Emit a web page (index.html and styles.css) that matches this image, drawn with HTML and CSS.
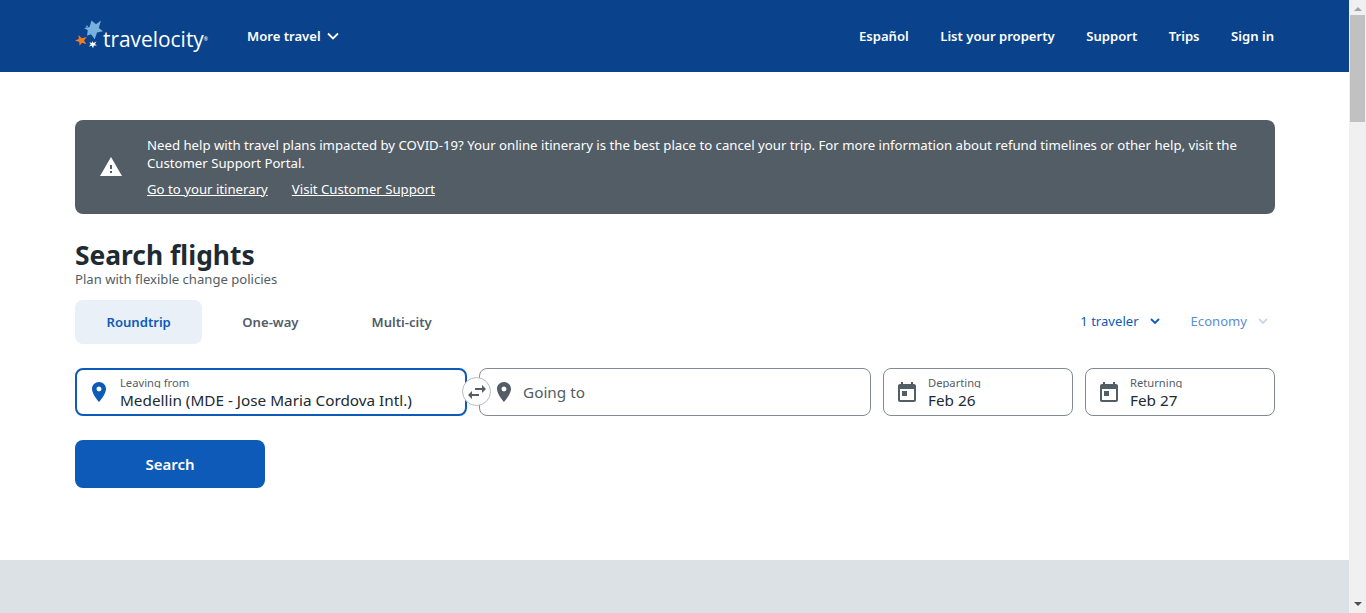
FILE: index.html
```html
<!DOCTYPE html>
<html lang="en">
<head>
<meta charset="UTF-8" />
<meta name="viewport" content="width=device-width, initial-scale=1" />
<title>Search flights</title>
<link rel="stylesheet" href="styles.css">
</head>
<body>

<div class="page">
  <header class="topbar">
    <a class="logo" href="#">
      <svg class="logo-stars" width="30" height="32" viewBox="0 0 30 32">
        <path fill="#78b0de" d="M16.500 2.500l4.500 3.800 5-3.800-2.200 7.500 4.200 3.200-6 1.300-2.300 6.800-3.700-5-4 1.500.8-5.500-3.800-2.300 5.500-1z"/>
        <circle fill="#78b0de" cx="12" cy="8.500" r=".9"/>
        <path fill="#f37b21" d="M3.500 17l3.300 3.200 5-1.200-2.800 3.400 2.500 3.800-4.400-1.400-2.600 3-.2-3.700L0 22.500l3.800-1.500z"/>
        <path fill="#fff" d="M17.500 23l1 2 3-1.500-1.600 2.600 2 1.500-3-.1-.9 2.700-1.200-2.400-3.200.8 2.200-2.100-1.500-2.200 2.700.8z"/>
      </svg>
      <span class="logo-text">travelocity</span><span class="logo-mark">®</span>
    </a>
    <a class="more-travel" href="#">More travel
      <svg width="12" height="8" viewBox="0 0 12 8"><path d="M1 1.500l5 5 5-5" fill="none" stroke="#fff" stroke-width="1.800"/></svg>
    </a>
    <nav class="topnav">
      <a href="#">Español</a>
      <a href="#">List your property</a>
      <a href="#">Support</a>
      <a href="#">Trips</a>
      <a href="#">Sign in</a>
    </nav>
  </header>

  <main class="content">
    <section class="notice">
      <svg class="notice-icon" width="24" height="24" viewBox="0 0 24 24">
        <path fill="#fff" d="M1 21h22L12 2 1 21zm12-3h-2v-2h2v2zm0-4h-2v-4h2v4z"/>
      </svg>
      <div class="notice-body">
        <p>Need help with travel plans impacted by COVID-19? Your online itinerary is the best place to cancel your trip. For more information about refund timelines or other help, visit the Customer Support Portal.</p>
        <div class="notice-links">
          <a href="#">Go to your itinerary</a>
          <a href="#">Visit Customer Support</a>
        </div>
      </div>
    </section>

    <h1>Search flights</h1>
    <p class="subtitle">Plan with flexible change policies</p>

    <div class="options">
      <div class="tabs">
        <a class="tab active" href="#">Roundtrip</a>
        <a class="tab" href="#">One-way</a>
        <a class="tab" href="#">Multi-city</a>
      </div>
      <div class="selects">
        <a class="select" href="#">1 traveler
          <svg width="10" height="7" viewBox="0 0 10 7"><path d="M1 1l4 4 4-4" fill="none" stroke="#0d5ab8" stroke-width="1.800"/></svg>
        </a>
        <a class="select faded" href="#">Economy
          <svg width="10" height="7" viewBox="0 0 10 7"><path d="M1 1l4 4 4-4" fill="none" stroke="#c6d8ee" stroke-width="1.800"/></svg>
        </a>
      </div>
    </div>

    <div class="fields">
      <div class="field place focus">
        <svg class="icon" width="14" height="20" viewBox="5 2 14 20"><path fill="#0d5ab8" d="M12 2C8.130 2 5 5.130 5 9c0 5.250 7 13 7 13s7-7.750 7-13c0-3.870-3.130-7-7-7zm0 9.500a2.500 2.500 0 0 1 0-5 2.500 2.500 0 0 1 0 5z"/></svg>
        <div class="field-text">
          <span class="field-label">Leaving from</span>
          <span class="field-value">Medellin (MDE - Jose Maria Cordova Intl.)</span>
        </div>
      </div>
      <div class="field place going">
        <svg class="icon" width="14" height="20" viewBox="5 2 14 20"><path fill="#535d66" d="M12 2C8.130 2 5 5.130 5 9c0 5.250 7 13 7 13s7-7.750 7-13c0-3.870-3.130-7-7-7zm0 9.500a2.500 2.500 0 0 1 0-5 2.500 2.500 0 0 1 0 5z"/></svg>
        <span class="placeholder">Going to</span>
        <span class="swap">
          <svg width="24" height="24" viewBox="0 0 24 24"><path fill="#535d66" d="M6.990 11L3 15l3.990 4v-3H14v-2H6.990v-3zM21 9l-3.990-4v3H10v2h7.010v3L21 9z"/></svg>
        </span>
      </div>
      <div class="field date">
        <svg class="icon" width="18" height="20" viewBox="3 2 18 20"><path fill="#535d66" d="M19 4h-1V2h-2v2H8V2H6v2H5c-1.110 0-1.990.9-1.990 2L3 20c0 1.100.89 2 2 2h14c1.100 0 2-.9 2-2V6c0-1.100-.9-2-2-2zm0 16H5V9h14v11zM7 11h5v5H7z"/></svg>
        <div class="field-text">
          <span class="field-label">Departing</span>
          <span class="field-value">Feb 26</span>
        </div>
      </div>
      <div class="field date">
        <svg class="icon" width="18" height="20" viewBox="3 2 18 20"><path fill="#535d66" d="M19 4h-1V2h-2v2H8V2H6v2H5c-1.110 0-1.990.9-1.990 2L3 20c0 1.100.89 2 2 2h14c1.100 0 2-.9 2-2V6c0-1.100-.9-2-2-2zm0 16H5V9h14v11zM7 11h5v5H7z"/></svg>
        <div class="field-text">
          <span class="field-label">Returning</span>
          <span class="field-value">Feb 27</span>
        </div>
      </div>
    </div>

    <button class="search-btn">Search</button>
  </main>

  <div class="footer-band"></div>
</div>

<div class="scrollbar">
  <span class="arrow up"></span>
  <span class="thumb"></span>
  <span class="arrow down"></span>
</div>

</body>
</html>
```

FILE: styles.css
```css
* {
  box-sizing: border-box;
}
html, body {
  height: 100%;
}
body {
  margin: 0;
  display: flex;
  overflow: hidden;
  font-family: "Noto Sans", Arial, sans-serif;
  font-size: 13.200px;
  color: #202a33;
  background: #fff;
}
a {
  color: inherit;
  text-decoration: none;
}
.page {
  flex: 1;
  min-width: 0;
  display: flex;
  flex-direction: column;
}

/* top bar */
.topbar {
  height: 72px;
  flex-shrink: 0;
  display: flex;
  align-items: center;
  padding: 0 75px;
  background: #0a438b;
  color: #fff;
  font-weight: 600;
  font-size: 13.100px;
}
.logo {
  display: flex;
  align-items: flex-start;
  width: 172px;
  height: 34px;
  margin-top: -2px;
}
.logo-stars {
  flex-shrink: 0;
  margin-right: -2px;
}
.logo-text {
  margin-top: 6px;
  font-family: "Open Sans", sans-serif;
  font-weight: 400;
  font-size: 20.900px;
  line-height: 30px;
}
.logo-mark {
  margin-top: 18px;
  font-size: 5px;
  line-height: 6px;
}
.more-travel {
  display: flex;
  align-items: center;
  gap: 6px;
}
.topnav {
  margin-left: auto;
  display: flex;
  gap: 31.500px;
}

.content {
  flex: 1;
  padding: 48px 74px 0 75px;
}

/* covid notice */
.notice {
  display: flex;
  align-items: center;
  height: 94px;
  padding: 0 24px;
  border-radius: 8px;
  background: #535d66;
  color: #fff;
  line-height: 18px;
}
.notice-icon {
  flex-shrink: 0;
  margin-right: 24px;
}
.notice-body p {
  margin: 0;
}
.notice-links {
  display: flex;
  gap: 24px;
  margin-top: 8px;
}
.notice-links a {
  text-decoration: underline;
}

h1 {
  margin: 23px 0 0;
  font-size: 26.400px;
  line-height: 36px;
  font-weight: 700;
  color: #202a33;
}
.subtitle {
  margin: -3px 0 0;
  font-size: 13.100px;
  line-height: 18px;
  color: #535d66;
}

/* trip type + traveler row */
.options {
  display: flex;
  justify-content: space-between;
  align-items: center;
  margin-top: 12px;
}
.tabs {
  display: flex;
}
.tab {
  height: 44px;
  padding: 0 31.500px;
  display: flex;
  align-items: center;
  border-radius: 8px;
  font-weight: 600;
  font-size: 13.100px;
  color: #535d66;
}
.tab + .tab {
  padding: 0 40px;
}
.tab + .tab + .tab {
  padding-left: 33px;
}
.tab.active {
  background: #e9f0f8;
  color: #0d5ab8;
}
.selects {
  display: flex;
  gap: 31px;
  padding-right: 7px;
  margin-top: -2px;
}
.select {
  display: flex;
  align-items: center;
  gap: 11px;
  font-size: 13.100px;
  color: #0d5ab8;
}
.select.faded {
  color: #5a90d2;
}

/* search fields */
.fields {
  display: flex;
  gap: 12px;
  margin-top: 24px;
}
.field {
  position: relative;
  height: 48px;
  display: flex;
  align-items: center;
  border: 1px solid #818a94;
  border-radius: 8px;
  background: #fff;
}
.field.place {
  width: 392px;
  padding-left: 17px;
}
.field.date {
  width: 190px;
  padding-left: 14px;
}
.field.focus {
  border: 2px solid #0d5ab8;
  padding-left: 15px;
}
.icon {
  flex-shrink: 0;
}
.field-text {
  display: flex;
  flex-direction: column;
  margin-left: 14px;
  padding-top: 2px;
}
.field.date .field-text {
  margin-left: 12px;
}
.field-label {
  height: 12px;
  margin-bottom: 2px;
  overflow: hidden;
  font-size: 11.200px;
  line-height: 14px;
  color: #535d66;
}
.field-value {
  font-size: 15.300px;
  line-height: 21px;
  color: #202a33;
}
.placeholder {
  margin-left: 12px;
  font-size: 15.300px;
  color: #535d66;
}
/* round button sitting on the gap between the two place fields */
.swap {
  position: absolute;
  left: -18px;
  top: 8px;
  width: 29px;
  height: 29px;
  display: flex;
  align-items: center;
  justify-content: center;
  border: 1px solid #b5bcc4;
  border-radius: 50%;
  background: #fff;
}
.search-btn {
  display: block;
  width: 190px;
  height: 48px;
  margin-top: 24px;
  border: 0;
  border-radius: 8px;
  background: #0d5ab8;
  color: #fff;
  font-family: inherit;
  font-size: 15px;
  font-weight: 600;
}

.footer-band {
  height: 53px;
  flex-shrink: 0;
  background: #dce1e5;
}

/* browser scrollbar */
.scrollbar {
  width: 17px;
  flex-shrink: 0;
  display: flex;
  flex-direction: column;
  align-items: center;
  background: #f0f0f0;
}
.thumb {
  width: 15px;
  height: 107px;
  margin-top: 4px;
  background: #c1c1c1;
}
.arrow {
  width: 0;
  height: 0;
  border-left: 4px solid transparent;
  border-right: 4px solid transparent;
}
.arrow.up {
  margin-top: 7px;
  border-bottom: 4px solid #a3a3a3;
}
.arrow.down {
  margin-top: auto;
  margin-bottom: 7px;
  border-top: 4px solid #505050;
}
```
